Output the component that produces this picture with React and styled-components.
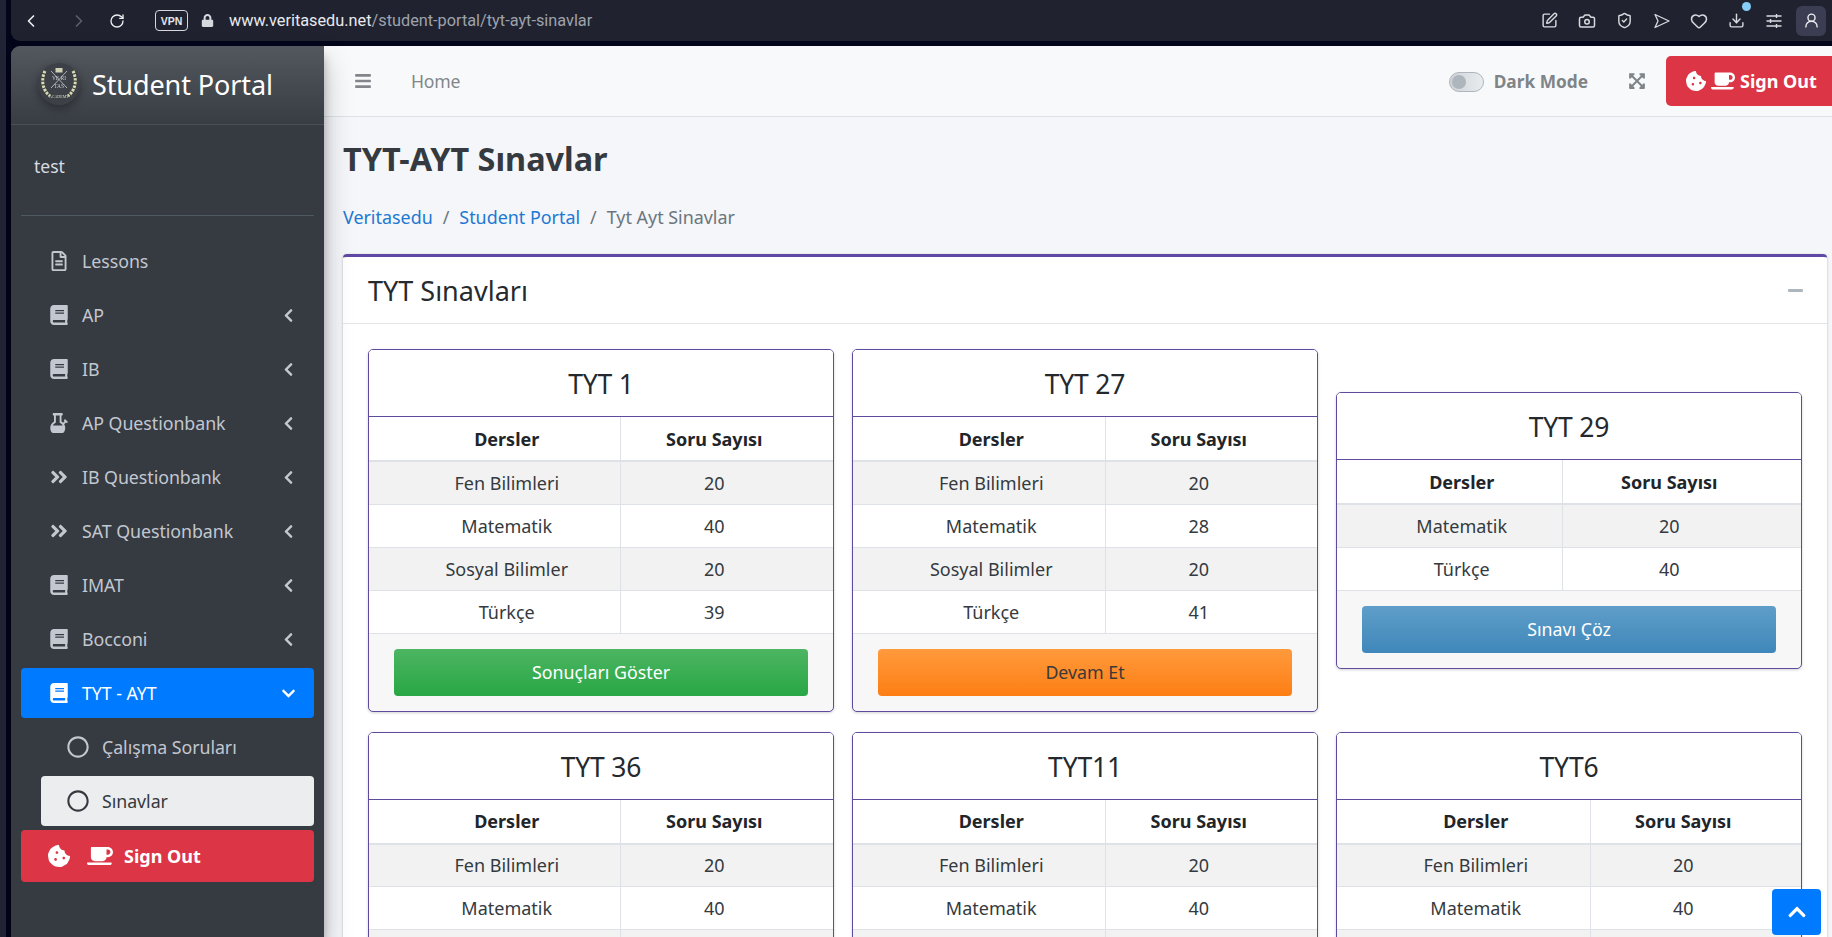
import React from "react";
import styled, { createGlobalStyle } from "styled-components";
import { FaBars, FaBook, FaBong, FaChevronDown, FaChevronLeft, FaChevronUp, FaCookieBite, FaCoffee, FaExpandArrowsAlt, FaMinus, FaRegCircle, FaRegFileAlt, FaAngleDoubleRight, FaLock } from "react-icons/fa";
import { ChevronLeft, ChevronRight, RotateCw, Camera, ShieldCheck, Heart, Download, UserRound, SquarePen } from "lucide-react";

const Global = createGlobalStyle`
  html, body { margin: 0; height: 100%; overflow: hidden; }
  #root { height: 100%; }
  * { box-sizing: border-box; }
  body { font-family: "Noto Sans", "Liberation Sans", sans-serif; font-size: 18px; color: #212529; }
`;
const Win = styled.div`
  height: 937px; display: flex; flex-direction: column; overflow: hidden;
  background: #03051a; border-left: 6px solid #1f2333; padding-left: 5px;
`;
const Bar = styled.header`
  height: 41px; flex: none; margin-bottom: 5px; background: #20232f; border-radius: 0 0 0 9px;
  display: flex; align-items: center; color: #e8e9ee;
`;
const NavBtn = styled.span`
  display: flex; width: ${p => p.$w}px; justify-content: center; color: ${p => p.$dim ? "#5c606c" : "#eceef2"};
`;
const Vpn = styled.span`
  width: 33px; height: 21px; margin-left: 28px; border: 1.5px solid #d5d7dd; border-radius: 4px;
  font: 700 10.5px "Liberation Sans", sans-serif; display: flex; align-items: center; justify-content: center; color: #e4e6ea;
`;
const Lock = styled.span`
  display: flex; margin-left: 13px; color: #d6d8de;
`;
const Url = styled.span`
  margin-left: 15px; font: 400 16.3px Roboto, sans-serif; color: #9ea2ad;
  b { font-weight: 400; color: #e8e9ee; }
`;
const BarRight = styled.div`
  margin-left: auto; display: flex; align-items: center; color: #d8dae0;
`;
const BarIcon = styled.span`
  width: 37.5px; display: flex; justify-content: center; position: relative;
`;
const Dot = styled.i`
  position: absolute; top: -10px; right: 5px; width: 9px; height: 9px; border-radius: 50%; background: #86cdf7;
`;
const UserBox = styled.span`
  width: 30px; height: 30px; margin: 0 6px 0 3px; border-radius: 6px; background: #3b3e52;
  display: flex; align-items: center; justify-content: center; color: #eceef2;
`;
const Body = styled.div`
  flex: 1; display: flex; min-height: 0;
`;
const Side = styled.aside`
  width: 313px; flex: none; background: #363a41; border-radius: 9px 0 0 0; position: relative; z-index: 2;
  box-shadow: 0 14px 28px rgba(0,0,0,.25), 0 10px 10px rgba(0,0,0,.22);
  color: #c2c7d0;
`;
const Brand = styled.div`
  height: 79px; display: flex; align-items: center; padding-left: 26px;
  background: linear-gradient(#53585e, #383c43); border-bottom: 1px solid #4b5056; border-radius: 9px 0 0 0;
`;
const BrandText = styled.span`
  margin: 0 0 2px 11px; font-size: 27px; color: #fff; letter-spacing: -.1px; line-height: 1;
`;
const UserPanel = styled.div`
  height: 91px; margin: 0 10px; border-bottom: 1px solid #4f5962; padding: 30px 0 0 13px;
  color: #d8dbe0; font-size: 17.5px; line-height: 22px;
`;
const Nav = styled.nav`
  padding: 20px 10px 0; display: flex; flex-direction: column; gap: 4px;
`;
const Item = styled.div`
  height: 50px; border-radius: 4px; display: flex; align-items: center; padding-left: 27px; padding-right: 18px;
  font-size: 17.8px; letter-spacing: -.05px;
  background: ${p => p.$on ? "#007bff" : "transparent"}; color: ${p => p.$on ? "#fff" : "#c2c7d0"};
`;
const ItemIcon = styled.span`
  width: 22px; display: flex; justify-content: center; margin-right: 12px;
`;
const Caret = styled.span`
  margin-left: auto; display: flex;
`;
const Sub = styled.div`
  height: 50px; margin-left: 20px; border-radius: 4px; display: flex; align-items: center; padding-left: 26px;
  font-size: 17.8px; letter-spacing: -.05px; gap: 13px;
  background: ${p => p.$on ? "#ebedee" : "transparent"}; color: ${p => p.$on ? "#343a40" : "#c2c7d0"};
`;
const SideOut = styled.div`
  height: 52px; border-radius: 4px; background: #dc3545; color: #fff; display: flex; align-items: center;
  padding-left: 27px; font-weight: 700; font-size: 18px;
  svg:nth-child(2) { margin: 0 11px 0 17px; }
`;
const Main = styled.main`
  flex: 1; min-width: 0; background: #f4f6f9; display: flex; flex-direction: column;
`;
const Top = styled.div`
  height: 71px; flex: none; background: #f8f9fa; border-bottom: 1px solid #dee2e6; display: flex; align-items: center;
  padding-left: 30px; color: #82868a; font-size: 17.6px;
`;
const Home = styled.span`
  margin-left: 39px; letter-spacing: -.2px;
`;
const Toggle = styled.span`
  margin-left: auto; width: 35px; height: 20px; border-radius: 10px; border: 1px solid #adb5bd;
  background: linear-gradient(90deg, #cfd3d7, #e9ecef); padding: 2px 0 0 2px; display: block; margin-top: 1px;
  &::before { content: ""; display: block; width: 14px; height: 14px; border-radius: 50%; background: #adb5bd; }
`;
const DarkLabel = styled.span`
  margin-left: 10px; font-weight: 700; color: #7f8488; font-size: 17.3px;
`;
const Expand = styled.span`
  margin-left: 40px; display: flex; color: #7f8488;
`;
const TopOut = styled.div`
  margin-left: 20px; width: 166px; height: 50px; background: #dc3545; color: #fff; border-radius: 5px 0 0 5px;
  display: flex; align-items: center; padding-left: 20px; font-weight: 700; font-size: 18px;
  svg:nth-child(2) { margin: 0 5px; }
`;
const Content = styled.div`
  flex: 1; min-height: 0; padding: 0 5px 0 19px; overflow: hidden;
`;
const Title = styled.h1`
  margin: 22px 0 0; font-size: 32.4px; font-weight: 700; line-height: 38px; color: #343a40;
`;
const Crumbs = styled.div`
  margin-top: 28px; height: 25px; line-height: 25px; display: flex; color: #6c757d; font-size: 17.9px;
  a { color: #1f78d1; }
  i { font-style: normal; margin: 0 10px; }
`;
const Card = styled.section`
  margin-top: 24px; background: #fff; border-top: 3px solid #6049a5; border-radius: 4px 4px 0 0;
  box-shadow: 0 0 1px rgba(0,0,0,.125), 0 1px 3px rgba(0,0,0,.2);
`;
const CardHead = styled.div`
  height: 67px; border-bottom: 1px solid #e3e5e8; display: flex; align-items: center; justify-content: space-between;
  padding: 0 23px 0 25px; font-size: 27px; color: #262a2e; margin-bottom: 25px;
  svg { color: #adb5bd; }
`;
const Grid = styled.div`
  display: grid; grid-template-columns: repeat(3, 466px); column-gap: 18px; row-gap: 20px; padding: 0 25px; align-items: center;
`;
const Exam = styled.article`
  border: 1px solid #5e4b9e; border-radius: 5px; background: #f7f7f7; overflow: hidden;
  box-shadow: 0 1px 3px rgba(0,0,0,.18);
`;
const ExamTitle = styled.div`
  height: 67px; padding-top: 2px; background: #fff; border-bottom: 1px solid #5e4b9e; display: flex; align-items: center; justify-content: center;
  font-size: 26.5px; letter-spacing: -.2px; color: #25292d;
`;
const Table = styled.table`
  width: 100%; border-collapse: collapse; table-layout: fixed; background: #fff;
`;
const Th = styled.th`
  height: 44px; padding: 0 0 0 25px; text-align: center; font-size: 18px; font-weight: 700;
  border-bottom: 2px solid #dee2e6; color: #212529; width: ${p => p.$w ? p.$w + "px" : "auto"};
  & + & { border-left: 1px solid #dee2e6; padding: 0 25px 0 0; }
`;
const Tr = styled.tr`
  background: ${p => p.$odd ? "#f2f2f2" : "#fff"};
`;
const Td = styled.td`
  height: 43px; padding: 0 0 0 25px; text-align: center; border-bottom: 1px solid #dee2e6; color: #343a40;
  font-size: 18px;
  & + & { border-left: 1px solid #dee2e6; padding: 0 25px 0 0; }
`;
const Foot = styled.div`
  padding: 15px 25px 15px;
`;
const Action = styled.div`
  height: 47px; border-radius: 4px; display: flex; align-items: center; justify-content: center;
  font-size: 17.8px; color: ${p => p.$dark ? "#3a3a3a" : "#fff"};
  background: linear-gradient(${p => p.$a}, ${p => p.$b});
`;
const UpBtn = styled.div`
  position: fixed; right: 11px; bottom: 2px; width: 49px; height: 46px; border-radius: 4px; background: #007bff; color: #fff;
  display: flex; align-items: center; justify-content: center; z-index: 5;
`;

const Logo = () => (
  <svg width="44" height="46" viewBox="0 0 44 46" style={{ filter: "drop-shadow(0 3px 4px rgba(0,0,0,.35))", flex: "none" }}>
    <circle cx="22" cy="22" r="21" fill="#3d4147" />
    <path d="M8 9C4 17 5 28 13 34M36 9C40 17 39 28 31 34" fill="none" stroke="#d9dcae" strokeWidth="3" strokeDasharray="2.5 1.2" />
    <path d="M14 9L30 26M30 9L14 26" stroke="#aeb2b5" strokeWidth="1" />
    <rect x="18.5" y="6" width="7" height="4.5" fill="#cfd2b4" />
    <text x="22" y="18" textAnchor="middle" fontSize="5.5" fontFamily="Liberation Serif, serif" fill="#c6c9cb">VE RI</text>
    <text x="22" y="26" textAnchor="middle" fontSize="5.5" fontFamily="Liberation Serif, serif" fill="#c6c9cb">TAS</text>
    <text x="22" y="36" textAnchor="middle" fontSize="4" fontFamily="Liberation Serif, serif" fill="#d9dcc0">ACADEMY</text>
  </svg>
);
const SendIcon = () => (
  <svg width="16" height="16" viewBox="0 0 16 16" fill="none" stroke="currentColor" strokeWidth="1.3" strokeLinejoin="round">
    <path d="M1 1.5L15 8L1 14.5L4 8Z" />
  </svg>
);
const SlidersIcon = () => (
  <svg width="16" height="16" viewBox="0 0 16 16" stroke="currentColor" strokeWidth="1.4">
    <path d="M0.5 3H15.5M0.5 8H15.5M0.5 13H15.5M10.5 1V5M4.5 6V10M10.5 11V15" />
  </svg>
);

const menu = [
  ["Lessons", <FaRegFileAlt size={20} />, false],
  ["AP", <FaBook size={20} />, true],
  ["IB", <FaBook size={20} />, true],
  ["AP Questionbank", <FaBong size={20} />, true],
  ["IB Questionbank", <FaAngleDoubleRight size={20} />, true],
  ["SAT Questionbank", <FaAngleDoubleRight size={20} />, true],
  ["IMAT", <FaBook size={20} />, true],
  ["Bocconi", <FaBook size={20} />, true],
];
const four = (a, b, c, d) => [["Fen Bilimleri", a], ["Matematik", b], ["Sosyal Bilimler", c], ["Türkçe", d]];
const exams = [
  { name: "TYT 1", w: 251, rows: four(20, 40, 20, 39), btn: ["Sonuçları Göster", "#4db562", "#28a745"] },
  { name: "TYT 27", w: 252, rows: four(20, 28, 20, 41), btn: ["Devam Et", "#ff9a3c", "#fd7e14", true] },
  { name: "TYT 29", w: 225, rows: [["Matematik", 20], ["Türkçe", 40]], btn: ["Sınavı Çöz", "#5f9ec9", "#3f87ba"] },
  { name: "TYT 36", w: 251, rows: four(20, 40, 20, 40) },
  { name: "TYT11", w: 252, rows: four(20, 40, 20, 40) },
  { name: "TYT6", w: 253, rows: four(20, 40, 20, 40) },
];

export default function App() {
  return (
    <Win>
      <Global />
      <Bar>
        <NavBtn $w={40}><ChevronLeft size={20} /></NavBtn>
        <NavBtn $w={56} $dim><ChevronRight size={20} /></NavBtn>
        <NavBtn $w={20}><RotateCw size={16} /></NavBtn>
        <Vpn>VPN</Vpn>
        <Lock><FaLock size={13} /></Lock>
        <Url><b>www.veritasedu.net</b>/student-portal/tyt-ayt-sinavlar</Url>
        <BarRight>
          <BarIcon><SquarePen size={17} /></BarIcon>
          <BarIcon><Camera size={18} /></BarIcon>
          <BarIcon><ShieldCheck size={17} /></BarIcon>
          <BarIcon><SendIcon /></BarIcon>
          <BarIcon><Heart size={18} /></BarIcon>
          <BarIcon><Download size={17} /><Dot /></BarIcon>
          <BarIcon><SlidersIcon /></BarIcon>
          <UserBox><UserRound size={17} /></UserBox>
        </BarRight>
      </Bar>
      <Body>
        <Side>
          <Brand><Logo /><BrandText>Student Portal</BrandText></Brand>
          <UserPanel>test</UserPanel>
          <Nav>
            {menu.map(([label, icon, caret]) => (
              <Item key={label}>
                <ItemIcon>{icon}</ItemIcon>{label}
                {caret && <Caret><FaChevronLeft size={15} /></Caret>}
              </Item>
            ))}
            <Item $on><ItemIcon><FaBook size={20} /></ItemIcon>TYT - AYT<Caret><FaChevronDown size={15} /></Caret></Item>
            <Sub><FaRegCircle size={22} />Çalışma Soruları</Sub>
            <Sub $on><FaRegCircle size={22} />Sınavlar</Sub>
            <SideOut><FaCookieBite size={22} /><FaCoffee size={26} />Sign Out</SideOut>
          </Nav>
        </Side>
        <Main>
          <Top>
            <FaBars size={18} />
            <Home>Home</Home>
            <Toggle />
            <DarkLabel>Dark Mode</DarkLabel>
            <Expand><FaExpandArrowsAlt size={18} /></Expand>
            <TopOut><FaCookieBite size={20} /><FaCoffee size={24} />Sign Out</TopOut>
          </Top>
          <Content>
            <Title>TYT-AYT Sınavlar</Title>
            <Crumbs><a>Veritasedu</a><i>/</i><a>Student Portal</a><i>/</i><span>Tyt Ayt Sinavlar</span></Crumbs>
            <Card>
              <CardHead>TYT Sınavları<FaMinus size={17} /></CardHead>
              <Grid>
                {exams.map(e => (
                  <Exam key={e.name}>
                    <ExamTitle>{e.name}</ExamTitle>
                    <Table>
                      <thead><tr><Th $w={e.w}>Dersler</Th><Th>Soru Sayısı</Th></tr></thead>
                      <tbody>
                        {e.rows.map(([n, v], i) => (
                          <Tr key={n} $odd={i % 2 === 0}><Td>{n}</Td><Td>{v}</Td></Tr>
                        ))}
                      </tbody>
                    </Table>
                    {e.btn && <Foot><Action $a={e.btn[1]} $b={e.btn[2]} $dark={e.btn[3]}>{e.btn[0]}</Action></Foot>}
                  </Exam>
                ))}
              </Grid>
            </Card>
          </Content>
        </Main>
      </Body>
      <UpBtn><FaChevronUp size={20} /></UpBtn>
    </Win>
  );
}
